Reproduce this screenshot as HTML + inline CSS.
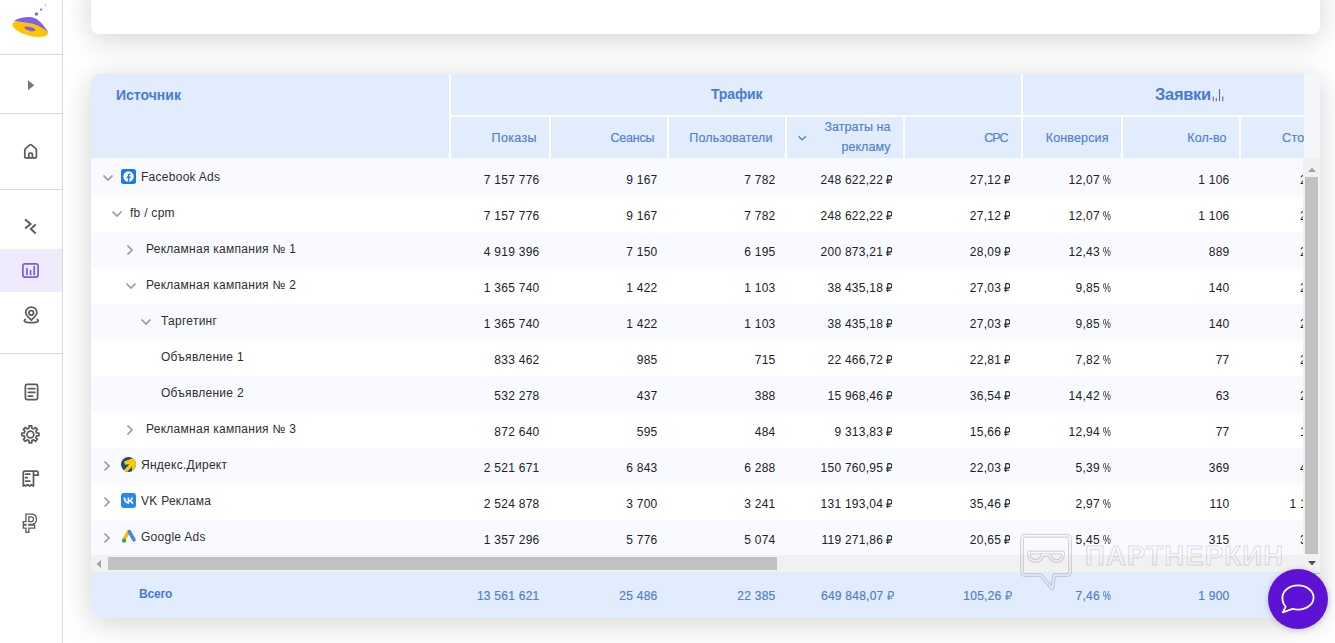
<!DOCTYPE html><html><head><meta charset="utf-8"><style>
*{box-sizing:border-box;margin:0;padding:0}
html,body{width:1335px;height:643px;overflow:hidden;background:#fff;font-family:"Liberation Sans",sans-serif;}
.abs{position:absolute}
.side{position:absolute;left:0;top:0;width:63px;height:643px;background:#fff;border-right:1px solid #dadada}
.hl{position:absolute;left:0;width:62px;height:1px;background:#dadada}
.card{position:absolute;background:#fff;border-radius:8px;box-shadow:0 5px 30px rgba(0,0,0,.18)}
.t{position:absolute;white-space:nowrap;font-size:12px;line-height:14px;color:#2e2e2e;letter-spacing:.27px}
.n{position:absolute;white-space:nowrap;font-size:12px;line-height:14px;color:#222;text-align:right;letter-spacing:.25px}
.h{position:absolute;white-space:nowrap;font-size:12.5px;line-height:14px;color:#5080cf;text-align:right;letter-spacing:.35px;-webkit-text-stroke:.15px #5080cf}
.rb{display:inline-block;vertical-align:baseline;margin-left:-.8px}
.chev{position:absolute;line-height:0}
.pc{display:inline-block;transform:scaleX(.73);transform-origin:left;margin-right:-2.9px}
</style></head><body>

<div class="side">
<div class="hl" style="top:54px"></div>
<div class="hl" style="top:113px"></div>
<div class="hl" style="top:189px"></div>
<div class="hl" style="top:353px"></div>
<div class="abs" style="left:0;top:249px;width:62px;height:43px;background:#efebfd"></div>
<svg class="abs" style="left:0;top:0" width="62" height="643" viewBox="0 0 62 643">
<circle cx="36.4" cy="14" r="1.7" fill="#7e5ff0"/><circle cx="41.1" cy="9.6" r="1.15" fill="#7e5ff0"/><circle cx="45.5" cy="5.1" r=".65" fill="#7e5ff0"/>
<ellipse cx="30.3" cy="28.8" rx="18.3" ry="6.9" transform="rotate(15 30.3 28.8)" fill="#fdc400"/>
<path d="M13.6 20.9C18 18.6 24 17 29.5 17.1C36 17.2 41.5 21.5 48.4 32.6C44 28.2 37 24.6 30.5 23.3C24.5 22.1 18.5 21.3 13.6 20.9Z" fill="#7e5ff0"/>
<ellipse cx="29.9" cy="28.8" rx="5.8" ry="1.9" transform="rotate(15 29.9 28.8)" fill="#7e5ff0"/>
<path d="M28 80.2L34.2 85.2 28 90.2Z" fill="#777"/>
<g fill="none" stroke="#5c5c5c" stroke-width="1.75" stroke-linecap="round" stroke-linejoin="round">
<path d="M24.8 157.1V150.2Q24.8 149.1 25.7 148.3L29.8 144.9Q30.6 144.2 31.4 144.9L35.5 148.3Q36.4 149.1 36.4 150.2V157.1Q36.4 157.8 35.7 157.8H25.5Q24.8 157.8 24.8 157.1Z"/>
<path d="M28.8 157.8V154.3Q28.8 153.2 29.9 153.2H31.3Q32.4 153.2 32.4 154.3V157.8"/>
<path d="M31.3 320.2C27.2 316.6 25.7 314.6 25.7 312.6A5.6 5.6 0 0 1 36.9 312.6C36.9 314.6 35.4 316.6 31.3 320.2Z"/>
<circle cx="31.3" cy="312.8" r="2.3"/>
<path d="M25.2 319.4C23.4 320.6 24.2 322.6 31.3 322.6C38.4 322.6 39.2 320.6 37.4 319.4"/>
<rect x="25.4" y="384.3" width="12.2" height="15.2" rx="1.6"/>
<path d="M28.3 388.6H34.8M28.3 392.4H34.8M28.3 396.2H32.6"/>
<path d="M36.62 432.91 L38.89 433.05 L38.89 435.75 L36.62 435.89 L35.86 437.74 L37.36 439.45 L35.45 441.36 L33.74 439.86 L31.89 440.62 L31.75 442.89 L29.05 442.89 L28.91 440.62 L27.06 439.86 L25.35 441.36 L23.44 439.45 L24.94 437.74 L24.18 435.89 L21.91 435.75 L21.91 433.05 L24.18 432.91 L24.94 431.06 L23.44 429.35 L25.35 427.44 L27.06 428.94 L28.91 428.18 L29.05 425.91 L31.75 425.91 L31.89 428.18 L33.74 428.94 L35.45 427.44 L37.36 429.35 L35.86 431.06Z"/>
<circle cx="30.4" cy="434.4" r="3.4"/>
<path d="M23.3 486V472.6Q23.3 471.2 24.7 471.2H36.3Q38.2 471.2 38.2 473.4V475.2H33.5M33.5 471.6V486L31.5 484.6 29.6 486 27.5 484.6 25.4 486 23.3 484.6"/>
<path d="M25.6 474.2H29.8M25.6 477.7H27.2M25.6 481.2H29.8"/>
</g>
<path d="M25.8 220L30.6 223.9 25.9 227.8M35 225L30.9 228.9 35 232.8" fill="none" stroke="#5e5e5e" stroke-width="2" stroke-linecap="square"/>
<g fill="none" stroke="#7a5ee8" stroke-width="1.7" stroke-linecap="round"><rect x="22.9" y="263.8" width="15.2" height="13.3" rx="2"/><path d="M26.9 268.6V274.4M30.6 270.6V274.4M34.2 266.7V274.4"/></g>
<path d="M27.4 531V515.5H32.2A3.9 3.9 0 0 1 32.2 523H24.8M24.8 526.6H33.2" fill="none" stroke="#5a5a5a" stroke-width="4.2" stroke-linecap="square"/>
<path d="M27.4 531V515.5H32.2A3.9 3.9 0 0 1 32.2 523H24.8M24.8 526.6H33.2" fill="none" stroke="#fff" stroke-width="1.6" stroke-linecap="square"/>
</svg>
</div>
<div class="card" style="left:91px;top:-20px;width:1229px;height:54px"></div>
<div class="card" style="left:91px;top:74px;width:1229px;height:544px;overflow:hidden">
<div class="abs" style="left:0;top:0;width:1213px;height:84px;background:#e1ecfd"></div>
<div class="abs" style="left:358px;top:0;width:2px;height:84px;background:#fff"></div>
<div class="abs" style="left:360px;top:41px;width:853px;height:2px;background:#fff"></div>
<div class="abs" style="left:930px;top:0;width:2px;height:41px;background:#fff"></div>
<div class="abs" style="left:458px;top:43px;width:2px;height:41px;background:#fff"></div>
<div class="abs" style="left:576px;top:43px;width:2px;height:41px;background:#fff"></div>
<div class="abs" style="left:694px;top:43px;width:2px;height:41px;background:#fff"></div>
<div class="abs" style="left:812px;top:43px;width:2px;height:41px;background:#fff"></div>
<div class="abs" style="left:930px;top:43px;width:2px;height:41px;background:#fff"></div>
<div class="abs" style="left:1030px;top:43px;width:2px;height:41px;background:#fff"></div>
<div class="abs" style="left:1148px;top:43px;width:2px;height:41px;background:#fff"></div>
<div class="t" style="left:25px;top:14px;font-size:14px;font-weight:bold;color:#4a7bd0;letter-spacing:0">Источник</div>
<div class="t" style="left:620px;top:13px;font-size:14px;font-weight:bold;color:#4a7bd0;letter-spacing:-.15px">Трафик</div>
<div class="t" style="left:1064px;top:11px;font-size:16.5px;line-height:18px;font-weight:bold;color:#4a7bd0;letter-spacing:-.3px">Заявки</div>
<svg class="abs" style="left:1121px;top:14px" width="12" height="14" viewBox="0 0 12 14"><path d="M1.3 13.2V8.5M4.3 13.2V10M7.5 13.2V1M10.8 13.2V8.5" stroke="#6f6f6f" stroke-width="1.1"/></svg>
<div class="h" style="right:783.15px;top:57px;letter-spacing:0.35px">Показы</div>
<div class="h" style="right:665.7px;top:57px;letter-spacing:-0.2px">Сеансы</div>
<div class="h" style="right:547.36px;top:57px;letter-spacing:0.14px">Пользователи</div>
<div class="h" style="right:312.6px;top:57px;letter-spacing:-1.1px">CPC</div>
<div class="h" style="right:211.3499999999999px;top:57px;letter-spacing:0.15px">Конверсия</div>
<div class="h" style="right:93.43000000000006px;top:57px;letter-spacing:0.07px">Кол-во</div>
<div class="h" style="left:1191px;top:57px;text-align:left">Стоимость</div>
<div class="h" style="right:429.5px;top:44.3px;line-height:19.5px;letter-spacing:.05px">Затраты на<br>рекламу</div>
<div class="chev" style="left:706px;top:61px"><svg width="10" height="6" viewBox="0 0 10 6"><path d="M1.5 1.2l3.7 3.6 3.7-3.6" fill="none" stroke="#5080cf" stroke-width="1.25"/></svg></div>
<div class="abs" style="left:1213px;top:0;width:16px;height:84px;background:#f5f6f9"></div>
<div class="abs" style="left:1213px;top:84px;width:16px;height:1px;background:#8fd3e6"></div>
<div class="abs" style="left:0;top:84px;width:1212px;height:38px;background:#f8faff"></div>
<div class="abs" style="left:0;top:122px;width:1212px;height:36px;background:#fff"></div>
<div class="abs" style="left:0;top:158px;width:1212px;height:36px;background:#f8faff"></div>
<div class="abs" style="left:0;top:194px;width:1212px;height:36px;background:#fff"></div>
<div class="abs" style="left:0;top:230px;width:1212px;height:36px;background:#f8faff"></div>
<div class="abs" style="left:0;top:266px;width:1212px;height:36px;background:#fff"></div>
<div class="abs" style="left:0;top:302px;width:1212px;height:36px;background:#f8faff"></div>
<div class="abs" style="left:0;top:338px;width:1212px;height:36px;background:#fff"></div>
<div class="abs" style="left:0;top:374px;width:1212px;height:36px;background:#f8faff"></div>
<div class="abs" style="left:0;top:410px;width:1212px;height:36px;background:#fff"></div>
<div class="abs" style="left:0;top:446px;width:1212px;height:36px;background:#f8faff"></div>
<div class="chev" style="left:10.5px;top:100px"><svg width="12" height="8" viewBox="0 0 12 8"><path d="M1.5 1.5l4.5 4.5 4.5-4.5" fill="none" stroke="#9a9a9a" stroke-width="1.7"/></svg></div>
<div class="abs" style="left:30px;top:95px;line-height:0"><svg width="15" height="15" viewBox="0 0 15 15"><rect width="15" height="15" rx="2.5" fill="#1877f2"/><circle cx="7.5" cy="7.5" r="5.2" fill="#fff"/><path d="M8.3 12.7V8.9h1.3l.2-1.5H8.3v-.9c0-.4.1-.7.7-.7h.8V4.5c-.1 0-.6-.1-1.1-.1-1.1 0-1.9.7-1.9 1.9v1.1H5.6v1.5h1.2v3.8z" fill="#1877f2"/></svg></div>
<div class="t" style="left:50px;top:96px">Facebook Ads</div>
<div class="n" style="right:780.5px;top:99px">7 157 776</div>
<div class="n" style="right:662.5px;top:99px">9 167</div>
<div class="n" style="right:544.5px;top:99px">7 782</div>
<div class="n" style="right:427.6px;top:99px">248 622,22 <svg class="rb" width="6.5" height="9" viewBox="0 0 6.5 9"><path d="M1.75 0.6V9M1.75 0.6H3.7A2.2 2.2 0 0 1 3.7 5.1H0.1M0.1 7.2H4.9" fill="none" stroke="currentColor" stroke-width="1.1"/></svg></div>
<div class="n" style="right:309.6px;top:99px">27,12 <svg class="rb" width="6.5" height="9" viewBox="0 0 6.5 9"><path d="M1.75 0.6V9M1.75 0.6H3.7A2.2 2.2 0 0 1 3.7 5.1H0.1M0.1 7.2H4.9" fill="none" stroke="currentColor" stroke-width="1.1"/></svg></div>
<div class="n" style="right:208.5px;top:99px">12,07 <span class="pc">%</span></div>
<div class="n" style="right:90.5px;top:99px">1 106</div>
<div class="n" style="right:-27.40000000000009px;top:99px">224,79 <svg class="rb" width="6.5" height="9" viewBox="0 0 6.5 9"><path d="M1.75 0.6V9M1.75 0.6H3.7A2.2 2.2 0 0 1 3.7 5.1H0.1M0.1 7.2H4.9" fill="none" stroke="currentColor" stroke-width="1.1"/></svg></div>
<div class="chev" style="left:19.5px;top:136px"><svg width="12" height="8" viewBox="0 0 12 8"><path d="M1.5 1.5l4.5 4.5 4.5-4.5" fill="none" stroke="#9a9a9a" stroke-width="1.7"/></svg></div>
<div class="t" style="left:39px;top:132px">fb / cpm</div>
<div class="n" style="right:780.5px;top:135px">7 157 776</div>
<div class="n" style="right:662.5px;top:135px">9 167</div>
<div class="n" style="right:544.5px;top:135px">7 782</div>
<div class="n" style="right:427.6px;top:135px">248 622,22 <svg class="rb" width="6.5" height="9" viewBox="0 0 6.5 9"><path d="M1.75 0.6V9M1.75 0.6H3.7A2.2 2.2 0 0 1 3.7 5.1H0.1M0.1 7.2H4.9" fill="none" stroke="currentColor" stroke-width="1.1"/></svg></div>
<div class="n" style="right:309.6px;top:135px">27,12 <svg class="rb" width="6.5" height="9" viewBox="0 0 6.5 9"><path d="M1.75 0.6V9M1.75 0.6H3.7A2.2 2.2 0 0 1 3.7 5.1H0.1M0.1 7.2H4.9" fill="none" stroke="currentColor" stroke-width="1.1"/></svg></div>
<div class="n" style="right:208.5px;top:135px">12,07 <span class="pc">%</span></div>
<div class="n" style="right:90.5px;top:135px">1 106</div>
<div class="n" style="right:-27.40000000000009px;top:135px">224,79 <svg class="rb" width="6.5" height="9" viewBox="0 0 6.5 9"><path d="M1.75 0.6V9M1.75 0.6H3.7A2.2 2.2 0 0 1 3.7 5.1H0.1M0.1 7.2H4.9" fill="none" stroke="currentColor" stroke-width="1.1"/></svg></div>
<div class="chev" style="left:35px;top:170px"><svg width="8" height="12" viewBox="0 0 8 12"><path d="M1.5 1.5l4.5 4.5-4.5 4.5" fill="none" stroke="#9a9a9a" stroke-width="1.7"/></svg></div>
<div class="t" style="left:55px;top:168px">Рекламная кампания № 1</div>
<div class="n" style="right:780.5px;top:171px">4 919 396</div>
<div class="n" style="right:662.5px;top:171px">7 150</div>
<div class="n" style="right:544.5px;top:171px">6 195</div>
<div class="n" style="right:427.6px;top:171px">200 873,21 <svg class="rb" width="6.5" height="9" viewBox="0 0 6.5 9"><path d="M1.75 0.6V9M1.75 0.6H3.7A2.2 2.2 0 0 1 3.7 5.1H0.1M0.1 7.2H4.9" fill="none" stroke="currentColor" stroke-width="1.1"/></svg></div>
<div class="n" style="right:309.6px;top:171px">28,09 <svg class="rb" width="6.5" height="9" viewBox="0 0 6.5 9"><path d="M1.75 0.6V9M1.75 0.6H3.7A2.2 2.2 0 0 1 3.7 5.1H0.1M0.1 7.2H4.9" fill="none" stroke="currentColor" stroke-width="1.1"/></svg></div>
<div class="n" style="right:208.5px;top:171px">12,43 <span class="pc">%</span></div>
<div class="n" style="right:90.5px;top:171px">889</div>
<div class="n" style="right:-27.40000000000009px;top:171px">225,95 <svg class="rb" width="6.5" height="9" viewBox="0 0 6.5 9"><path d="M1.75 0.6V9M1.75 0.6H3.7A2.2 2.2 0 0 1 3.7 5.1H0.1M0.1 7.2H4.9" fill="none" stroke="currentColor" stroke-width="1.1"/></svg></div>
<div class="chev" style="left:33.5px;top:208px"><svg width="12" height="8" viewBox="0 0 12 8"><path d="M1.5 1.5l4.5 4.5 4.5-4.5" fill="none" stroke="#9a9a9a" stroke-width="1.7"/></svg></div>
<div class="t" style="left:55px;top:204px">Рекламная кампания № 2</div>
<div class="n" style="right:780.5px;top:207px">1 365 740</div>
<div class="n" style="right:662.5px;top:207px">1 422</div>
<div class="n" style="right:544.5px;top:207px">1 103</div>
<div class="n" style="right:427.6px;top:207px">38 435,18 <svg class="rb" width="6.5" height="9" viewBox="0 0 6.5 9"><path d="M1.75 0.6V9M1.75 0.6H3.7A2.2 2.2 0 0 1 3.7 5.1H0.1M0.1 7.2H4.9" fill="none" stroke="currentColor" stroke-width="1.1"/></svg></div>
<div class="n" style="right:309.6px;top:207px">27,03 <svg class="rb" width="6.5" height="9" viewBox="0 0 6.5 9"><path d="M1.75 0.6V9M1.75 0.6H3.7A2.2 2.2 0 0 1 3.7 5.1H0.1M0.1 7.2H4.9" fill="none" stroke="currentColor" stroke-width="1.1"/></svg></div>
<div class="n" style="right:208.5px;top:207px">9,85 <span class="pc">%</span></div>
<div class="n" style="right:90.5px;top:207px">140</div>
<div class="n" style="right:-27.40000000000009px;top:207px">274,54 <svg class="rb" width="6.5" height="9" viewBox="0 0 6.5 9"><path d="M1.75 0.6V9M1.75 0.6H3.7A2.2 2.2 0 0 1 3.7 5.1H0.1M0.1 7.2H4.9" fill="none" stroke="currentColor" stroke-width="1.1"/></svg></div>
<div class="chev" style="left:48.5px;top:244px"><svg width="12" height="8" viewBox="0 0 12 8"><path d="M1.5 1.5l4.5 4.5 4.5-4.5" fill="none" stroke="#9a9a9a" stroke-width="1.7"/></svg></div>
<div class="t" style="left:70px;top:240px">Таргетинг</div>
<div class="n" style="right:780.5px;top:243px">1 365 740</div>
<div class="n" style="right:662.5px;top:243px">1 422</div>
<div class="n" style="right:544.5px;top:243px">1 103</div>
<div class="n" style="right:427.6px;top:243px">38 435,18 <svg class="rb" width="6.5" height="9" viewBox="0 0 6.5 9"><path d="M1.75 0.6V9M1.75 0.6H3.7A2.2 2.2 0 0 1 3.7 5.1H0.1M0.1 7.2H4.9" fill="none" stroke="currentColor" stroke-width="1.1"/></svg></div>
<div class="n" style="right:309.6px;top:243px">27,03 <svg class="rb" width="6.5" height="9" viewBox="0 0 6.5 9"><path d="M1.75 0.6V9M1.75 0.6H3.7A2.2 2.2 0 0 1 3.7 5.1H0.1M0.1 7.2H4.9" fill="none" stroke="currentColor" stroke-width="1.1"/></svg></div>
<div class="n" style="right:208.5px;top:243px">9,85 <span class="pc">%</span></div>
<div class="n" style="right:90.5px;top:243px">140</div>
<div class="n" style="right:-27.40000000000009px;top:243px">274,54 <svg class="rb" width="6.5" height="9" viewBox="0 0 6.5 9"><path d="M1.75 0.6V9M1.75 0.6H3.7A2.2 2.2 0 0 1 3.7 5.1H0.1M0.1 7.2H4.9" fill="none" stroke="currentColor" stroke-width="1.1"/></svg></div>
<div class="t" style="left:70px;top:276px">Объявление 1</div>
<div class="n" style="right:780.5px;top:279px">833 462</div>
<div class="n" style="right:662.5px;top:279px">985</div>
<div class="n" style="right:544.5px;top:279px">715</div>
<div class="n" style="right:427.6px;top:279px">22 466,72 <svg class="rb" width="6.5" height="9" viewBox="0 0 6.5 9"><path d="M1.75 0.6V9M1.75 0.6H3.7A2.2 2.2 0 0 1 3.7 5.1H0.1M0.1 7.2H4.9" fill="none" stroke="currentColor" stroke-width="1.1"/></svg></div>
<div class="n" style="right:309.6px;top:279px">22,81 <svg class="rb" width="6.5" height="9" viewBox="0 0 6.5 9"><path d="M1.75 0.6V9M1.75 0.6H3.7A2.2 2.2 0 0 1 3.7 5.1H0.1M0.1 7.2H4.9" fill="none" stroke="currentColor" stroke-width="1.1"/></svg></div>
<div class="n" style="right:208.5px;top:279px">7,82 <span class="pc">%</span></div>
<div class="n" style="right:90.5px;top:279px">77</div>
<div class="n" style="right:-27.40000000000009px;top:279px">291,78 <svg class="rb" width="6.5" height="9" viewBox="0 0 6.5 9"><path d="M1.75 0.6V9M1.75 0.6H3.7A2.2 2.2 0 0 1 3.7 5.1H0.1M0.1 7.2H4.9" fill="none" stroke="currentColor" stroke-width="1.1"/></svg></div>
<div class="t" style="left:70px;top:312px">Объявление 2</div>
<div class="n" style="right:780.5px;top:315px">532 278</div>
<div class="n" style="right:662.5px;top:315px">437</div>
<div class="n" style="right:544.5px;top:315px">388</div>
<div class="n" style="right:427.6px;top:315px">15 968,46 <svg class="rb" width="6.5" height="9" viewBox="0 0 6.5 9"><path d="M1.75 0.6V9M1.75 0.6H3.7A2.2 2.2 0 0 1 3.7 5.1H0.1M0.1 7.2H4.9" fill="none" stroke="currentColor" stroke-width="1.1"/></svg></div>
<div class="n" style="right:309.6px;top:315px">36,54 <svg class="rb" width="6.5" height="9" viewBox="0 0 6.5 9"><path d="M1.75 0.6V9M1.75 0.6H3.7A2.2 2.2 0 0 1 3.7 5.1H0.1M0.1 7.2H4.9" fill="none" stroke="currentColor" stroke-width="1.1"/></svg></div>
<div class="n" style="right:208.5px;top:315px">14,42 <span class="pc">%</span></div>
<div class="n" style="right:90.5px;top:315px">63</div>
<div class="n" style="right:-27.40000000000009px;top:315px">253,47 <svg class="rb" width="6.5" height="9" viewBox="0 0 6.5 9"><path d="M1.75 0.6V9M1.75 0.6H3.7A2.2 2.2 0 0 1 3.7 5.1H0.1M0.1 7.2H4.9" fill="none" stroke="currentColor" stroke-width="1.1"/></svg></div>
<div class="chev" style="left:35px;top:350px"><svg width="8" height="12" viewBox="0 0 8 12"><path d="M1.5 1.5l4.5 4.5-4.5 4.5" fill="none" stroke="#9a9a9a" stroke-width="1.7"/></svg></div>
<div class="t" style="left:55px;top:348px">Рекламная кампания № 3</div>
<div class="n" style="right:780.5px;top:351px">872 640</div>
<div class="n" style="right:662.5px;top:351px">595</div>
<div class="n" style="right:544.5px;top:351px">484</div>
<div class="n" style="right:427.6px;top:351px">9 313,83 <svg class="rb" width="6.5" height="9" viewBox="0 0 6.5 9"><path d="M1.75 0.6V9M1.75 0.6H3.7A2.2 2.2 0 0 1 3.7 5.1H0.1M0.1 7.2H4.9" fill="none" stroke="currentColor" stroke-width="1.1"/></svg></div>
<div class="n" style="right:309.6px;top:351px">15,66 <svg class="rb" width="6.5" height="9" viewBox="0 0 6.5 9"><path d="M1.75 0.6V9M1.75 0.6H3.7A2.2 2.2 0 0 1 3.7 5.1H0.1M0.1 7.2H4.9" fill="none" stroke="currentColor" stroke-width="1.1"/></svg></div>
<div class="n" style="right:208.5px;top:351px">12,94 <span class="pc">%</span></div>
<div class="n" style="right:90.5px;top:351px">77</div>
<div class="n" style="right:-27.40000000000009px;top:351px">120,96 <svg class="rb" width="6.5" height="9" viewBox="0 0 6.5 9"><path d="M1.75 0.6V9M1.75 0.6H3.7A2.2 2.2 0 0 1 3.7 5.1H0.1M0.1 7.2H4.9" fill="none" stroke="currentColor" stroke-width="1.1"/></svg></div>
<div class="chev" style="left:12px;top:386px"><svg width="8" height="12" viewBox="0 0 8 12"><path d="M1.5 1.5l4.5 4.5-4.5 4.5" fill="none" stroke="#9a9a9a" stroke-width="1.7"/></svg></div>
<div class="abs" style="left:30px;top:383px;line-height:0"><svg width="15" height="15" viewBox="0 0 15 15"><defs><clipPath id="yc"><circle cx="7.5" cy="7.5" r="7.5"/></clipPath></defs><g clip-path="url(#yc)"><rect width="15" height="15" fill="#1d4784"/><path d="M3.2 4.6L9 2.2 15 0V15H11.2L10.8 10.6 12 8.3 6.2 15H4.2L2.8 13.3 8.6 7.2 3.8 7.8z" fill="#fc0"/></g></svg></div>
<div class="t" style="left:50px;top:384px">Яндекс.Директ</div>
<div class="n" style="right:780.5px;top:387px">2 521 671</div>
<div class="n" style="right:662.5px;top:387px">6 843</div>
<div class="n" style="right:544.5px;top:387px">6 288</div>
<div class="n" style="right:427.6px;top:387px">150 760,95 <svg class="rb" width="6.5" height="9" viewBox="0 0 6.5 9"><path d="M1.75 0.6V9M1.75 0.6H3.7A2.2 2.2 0 0 1 3.7 5.1H0.1M0.1 7.2H4.9" fill="none" stroke="currentColor" stroke-width="1.1"/></svg></div>
<div class="n" style="right:309.6px;top:387px">22,03 <svg class="rb" width="6.5" height="9" viewBox="0 0 6.5 9"><path d="M1.75 0.6V9M1.75 0.6H3.7A2.2 2.2 0 0 1 3.7 5.1H0.1M0.1 7.2H4.9" fill="none" stroke="currentColor" stroke-width="1.1"/></svg></div>
<div class="n" style="right:208.5px;top:387px">5,39 <span class="pc">%</span></div>
<div class="n" style="right:90.5px;top:387px">369</div>
<div class="n" style="right:-27.40000000000009px;top:387px">408,57 <svg class="rb" width="6.5" height="9" viewBox="0 0 6.5 9"><path d="M1.75 0.6V9M1.75 0.6H3.7A2.2 2.2 0 0 1 3.7 5.1H0.1M0.1 7.2H4.9" fill="none" stroke="currentColor" stroke-width="1.1"/></svg></div>
<div class="chev" style="left:12px;top:422px"><svg width="8" height="12" viewBox="0 0 8 12"><path d="M1.5 1.5l4.5 4.5-4.5 4.5" fill="none" stroke="#9a9a9a" stroke-width="1.7"/></svg></div>
<div class="abs" style="left:30px;top:419px;line-height:0"><svg width="15" height="15" viewBox="0 0 15 15"><rect width="15" height="15" rx="3" fill="#2787f5"/><path d="M8.1 10.8c-3.4 0-5.4-2.4-5.5-6.3h1.7c.1 2.9 1.3 4.1 2.3 4.3V4.5h1.6V7c1-.1 2-1.2 2.4-2.5h1.6c-.3 1.5-1.4 2.7-2.2 3.1.8.4 2 1.3 2.5 3.2h-1.8c-.4-1.2-1.4-2.1-2.5-2.2v2.2z" fill="#fff"/></svg></div>
<div class="t" style="left:50px;top:420px">VK Реклама</div>
<div class="n" style="right:780.5px;top:423px">2 524 878</div>
<div class="n" style="right:662.5px;top:423px">3 700</div>
<div class="n" style="right:544.5px;top:423px">3 241</div>
<div class="n" style="right:427.6px;top:423px">131 193,04 <svg class="rb" width="6.5" height="9" viewBox="0 0 6.5 9"><path d="M1.75 0.6V9M1.75 0.6H3.7A2.2 2.2 0 0 1 3.7 5.1H0.1M0.1 7.2H4.9" fill="none" stroke="currentColor" stroke-width="1.1"/></svg></div>
<div class="n" style="right:309.6px;top:423px">35,46 <svg class="rb" width="6.5" height="9" viewBox="0 0 6.5 9"><path d="M1.75 0.6V9M1.75 0.6H3.7A2.2 2.2 0 0 1 3.7 5.1H0.1M0.1 7.2H4.9" fill="none" stroke="currentColor" stroke-width="1.1"/></svg></div>
<div class="n" style="right:208.5px;top:423px">2,97 <span class="pc">%</span></div>
<div class="n" style="right:90.5px;top:423px">110</div>
<div class="n" style="right:-27.40000000000009px;top:423px">1 192,66 <svg class="rb" width="6.5" height="9" viewBox="0 0 6.5 9"><path d="M1.75 0.6V9M1.75 0.6H3.7A2.2 2.2 0 0 1 3.7 5.1H0.1M0.1 7.2H4.9" fill="none" stroke="currentColor" stroke-width="1.1"/></svg></div>
<div class="chev" style="left:12px;top:458px"><svg width="8" height="12" viewBox="0 0 8 12"><path d="M1.5 1.5l4.5 4.5-4.5 4.5" fill="none" stroke="#9a9a9a" stroke-width="1.7"/></svg></div>
<div class="abs" style="left:30px;top:455px;line-height:0"><svg width="16" height="15" viewBox="0 0 16 15"><path d="M7.6 2.6L3 10.6" stroke="#fbbc04" stroke-width="3.6" stroke-linecap="round"/><path d="M8.4 2.6L13 10.8" stroke="#4285f4" stroke-width="3.6" stroke-linecap="round"/><circle cx="3.1" cy="11.6" r="2.2" fill="#34a853"/></svg></div>
<div class="t" style="left:50px;top:456px">Google Ads</div>
<div class="n" style="right:780.5px;top:459px">1 357 296</div>
<div class="n" style="right:662.5px;top:459px">5 776</div>
<div class="n" style="right:544.5px;top:459px">5 074</div>
<div class="n" style="right:427.6px;top:459px">119 271,86 <svg class="rb" width="6.5" height="9" viewBox="0 0 6.5 9"><path d="M1.75 0.6V9M1.75 0.6H3.7A2.2 2.2 0 0 1 3.7 5.1H0.1M0.1 7.2H4.9" fill="none" stroke="currentColor" stroke-width="1.1"/></svg></div>
<div class="n" style="right:309.6px;top:459px">20,65 <svg class="rb" width="6.5" height="9" viewBox="0 0 6.5 9"><path d="M1.75 0.6V9M1.75 0.6H3.7A2.2 2.2 0 0 1 3.7 5.1H0.1M0.1 7.2H4.9" fill="none" stroke="currentColor" stroke-width="1.1"/></svg></div>
<div class="n" style="right:208.5px;top:459px">5,45 <span class="pc">%</span></div>
<div class="n" style="right:90.5px;top:459px">315</div>
<div class="n" style="right:-27.40000000000009px;top:459px">378,64 <svg class="rb" width="6.5" height="9" viewBox="0 0 6.5 9"><path d="M1.75 0.6V9M1.75 0.6H3.7A2.2 2.2 0 0 1 3.7 5.1H0.1M0.1 7.2H4.9" fill="none" stroke="currentColor" stroke-width="1.1"/></svg></div>
<div class="abs" style="left:1212px;top:84px;width:17px;height:414px;background:#f1f1f1"></div>
<div class="abs" style="left:1214px;top:103px;width:13px;height:377px;background:#c1c1c1"></div>
<svg class="abs" style="left:1217px;top:92.5px" width="8" height="5" viewBox="0 0 8 5"><path d="M0 5l4-4.5L8 5z" fill="#a3a3a3"/></svg>
<svg class="abs" style="left:1217px;top:487px" width="8" height="5" viewBox="0 0 8 5"><path d="M0 0l4 4.5L8 0z" fill="#505050"/></svg>
<div class="abs" style="left:0;top:481px;width:1212px;height:17px;background:#f1f1f1"></div>
<div class="abs" style="left:17px;top:483px;width:669px;height:13px;background:#c1c1c1"></div>
<svg class="abs" style="left:5.200000000000003px;top:485.5px" width="5" height="8" viewBox="0 0 5 8"><path d="M5 0L.5 4 5 8z" fill="#a3a3a3"/></svg>
<div class="abs" style="left:0;top:498px;width:1229px;height:46px;background:#e1ecfd"></div>
<div class="abs" style="left:1212px;top:498px;width:17px;height:46px;background:#f1f1f1"></div>
<div class="abs" style="left:1212px;top:499px;width:17px;height:1px;background:#8fd3e6"></div>
<div class="t" style="left:48px;top:513px;font-weight:bold;color:#4a7bd0;letter-spacing:-.2px">Всего</div>
<div class="n" style="right:780.5px;top:515px;color:#5380c9;-webkit-text-stroke:.2px #5380c9">13 561 621</div>
<div class="n" style="right:662.5px;top:515px;color:#5380c9;-webkit-text-stroke:.2px #5380c9">25 486</div>
<div class="n" style="right:544.5px;top:515px;color:#5380c9;-webkit-text-stroke:.2px #5380c9">22 385</div>
<div class="n" style="right:426.20000000000005px;top:515px;color:#5380c9;-webkit-text-stroke:.2px #5380c9">649 848,07 <svg class="rb" style="margin-left:-.3px" width="7" height="9" viewBox="0 0 7 9"><path d="M1.9 0.6V9M1.9 0.6H4.1A2.35 2.35 0 0 1 4.1 5.3H0.2M0.2 7.3H5.3" fill="none" stroke="currentColor" stroke-width="1.1"/></svg></div>
<div class="n" style="right:308.20000000000005px;top:515px;color:#5380c9;-webkit-text-stroke:.2px #5380c9">105,26 <svg class="rb" style="margin-left:-.3px" width="7" height="9" viewBox="0 0 7 9"><path d="M1.9 0.6V9M1.9 0.6H4.1A2.35 2.35 0 0 1 4.1 5.3H0.2M0.2 7.3H5.3" fill="none" stroke="currentColor" stroke-width="1.1"/></svg></div>
<div class="n" style="right:208.5px;top:515px;color:#5380c9;-webkit-text-stroke:.2px #5380c9">7,46 <span class="pc">%</span></div>
<div class="n" style="right:90.5px;top:515px;color:#5380c9;-webkit-text-stroke:.2px #5380c9">1 900</div>
<div class="n" style="right:-27.799999999999955px;top:515px;color:#5380c9;-webkit-text-stroke:.2px #5380c9">342,03 <svg class="rb" style="margin-left:-.3px" width="7" height="9" viewBox="0 0 7 9"><path d="M1.9 0.6V9M1.9 0.6H4.1A2.35 2.35 0 0 1 4.1 5.3H0.2M0.2 7.3H5.3" fill="none" stroke="currentColor" stroke-width="1.1"/></svg></div>
</div>
<svg class="abs" style="left:1015px;top:528px" width="62" height="68" viewBox="1015 528 62 68">
<defs><mask id="wmm" maskUnits="userSpaceOnUse" x="1015" y="528" width="62" height="68">
<g fill="none" stroke="#fff" stroke-width="4" stroke-linejoin="round"><path d="M1025 535.8H1067A3 3 0 0 1 1070 538.8V572A3 3 0 0 1 1067 575H1054.3L1052.3 588.5 1040.5 575H1025A3 3 0 0 1 1022 572V538.8A3 3 0 0 1 1025 535.8z"/>
<path d="M1029 552.5H1063V555A6.6 6 0 0 1 1049.8 555H1042.2A6.6 6 0 0 1 1029 555Z"/></g>
<g fill="none" stroke="#000" stroke-width="1.6" stroke-linejoin="round"><path d="M1025 535.8H1067A3 3 0 0 1 1070 538.8V572A3 3 0 0 1 1067 575H1054.3L1052.3 588.5 1040.5 575H1025A3 3 0 0 1 1022 572V538.8A3 3 0 0 1 1025 535.8z"/>
<path d="M1029 552.5H1063V555A6.6 6 0 0 1 1049.8 555H1042.2A6.6 6 0 0 1 1029 555Z"/></g>
</mask></defs><rect x="1015" y="528" width="62" height="68" fill="rgba(0,0,0,.14)" mask="url(#wmm)"/></svg>
<div class="abs" style="left:1085px;top:540px;font-size:27.5px;line-height:32px;font-weight:bold;letter-spacing:1.2px;color:transparent;-webkit-text-stroke:1px rgba(0,0,0,.14);white-space:nowrap">ПАРТНЕРКИН</div>
<div class="abs" style="left:1268px;top:569px;width:60px;height:60px;border-radius:50%;background:#5e12d6;box-shadow:0 1px 6px rgba(0,0,0,.2)"></div>
<svg class="abs" style="left:1280px;top:584px" width="36" height="31" viewBox="0 0 36 31"><path d="M18 1.4C26.6 1.4 33.6 6.8 33.6 13.5S26.6 25.6 18 25.6c-1.9 0-3.7-.25-5.4-.75L2.8 28.3l2.9-5.6C3.6 20.6 2.4 17.3 2.4 13.5 2.4 6.8 9.4 1.4 18 1.4z" fill="none" stroke="#fff" stroke-width="1.8" stroke-linejoin="round"/></svg>
</body></html>
